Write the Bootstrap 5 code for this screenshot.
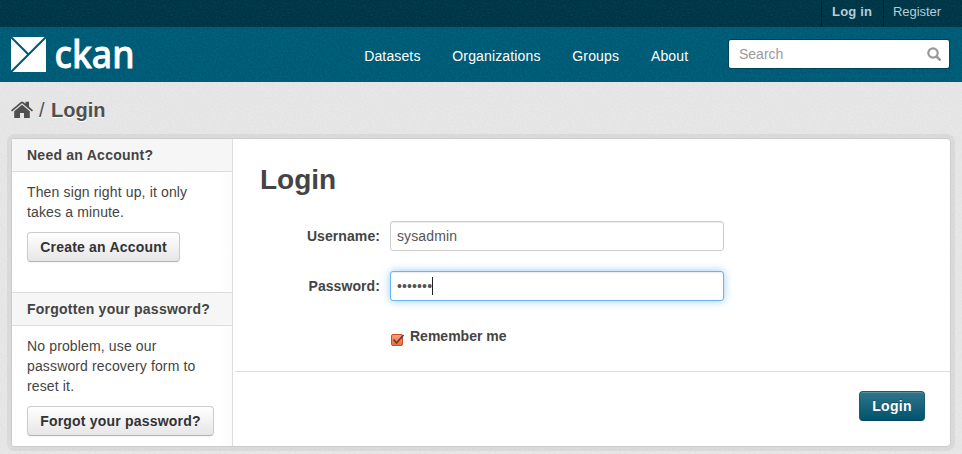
<!DOCTYPE html>
<html lang="en">
<head>
<meta charset="utf-8">
<meta name="viewport" content="width=device-width, initial-scale=1">
<title>Login - CKAN</title>
<link href="https://cdn.jsdelivr.net/npm/bootstrap@5.3.0/dist/css/bootstrap.min.css" rel="stylesheet">
<style>
:root { --grain: url("data:image/svg+xml,%3Csvg xmlns='http://www.w3.org/2000/svg' width='100' height='100'%3E%3Cfilter id='n' x='0' y='0' width='100%25' height='100%25'%3E%3CfeTurbulence type='fractalNoise' baseFrequency='.55' numOctaves='2' stitchTiles='stitch'/%3E%3CfeColorMatrix values='0 0 0 0 1 0 0 0 0 1 0 0 0 0 1 1.2 0 0 0 -.48'/%3E%3C/filter%3E%3Crect width='100' height='100' filter='url(%23n)' opacity='.4'/%3E%3C/svg%3E"); }
body { font-family: "Liberation Sans", Arial, sans-serif; font-size: 14px; line-height: 20px; color: #444; background: #005d7a; height: 454px; overflow: hidden; }
a { color: inherit; text-decoration: none; }
.account-bar { height: 27px; background: var(--grain), #003445; background-blend-mode: soft-light; font-size: 13px; color: #b7cdd5; }
.account-bar a { height: 27px; line-height: 24px; padding: 0 10px; border-left: 1px solid #00202b; }
.account-bar a + a { padding-left: 9px; }
.masthead { height: 55px; background: var(--grain), #005974; background-blend-mode: soft-light; color: #fff; padding: 0 13px 0 11px; }
.brand-art { display: block; margin-top: 1px; }
.site-nav { gap: 31.8px; margin-right: 40.8px; padding-top: 3px; letter-spacing: .14px; }
.site-search { width: 220px; height: 28px; background: #fff; border-radius: 2px; color: #999; padding: 0 8px 0 10px; box-shadow: 0 0 0 1px rgba(0,50,68,.55); margin-top: -1px; }
.page-main { height: 372px; background: var(--grain), #e4e4e4; padding: 0 11px; }
.crumbs { height: 56px; font-size: 20px; color: #505050; text-shadow: 0 1px 0 #fff; }
.crumbs span { margin: 0 6.500px 0 6px; }
.panel { height: 309px; background: #fff; border: 1px solid #ccc; border-radius: 4px; box-shadow: 0 0 0 4px rgba(0,0,0,.05); }
.side { width: 221px; border-right: 1px solid #ddd; background: linear-gradient(to right, #fff 205px, #fcfcfc); border-radius: 3px 0 0 3px; }
.side h2 { font-size: 14px; line-height: 20px; font-weight: 700; margin: 0; padding: 6px 15px; height: 33px; background: #f6f6f6; border-bottom: 1px solid #ddd; white-space: nowrap; letter-spacing: .24px; }
.side .second-title { margin-top: 30px; border-top: 1px solid #ddd; height: 34px; }
.side-text { padding: 10px 15px 0; }
.side-text p { margin: 0 0 10px; white-space: nowrap; letter-spacing: .14px; }
.btn-plain, .btn-go { font-size: 14px; line-height: 20px; font-weight: 700; padding: 4px 0; border-radius: 4px; height: 30px; white-space: nowrap; letter-spacing: .2px; }
.btn-plain { color: #333; border: 1px solid #ccc; border-bottom-color: #b3b3b3; background: linear-gradient(#fff, #e6e6e6); box-shadow: inset 0 1px 0 rgba(255,255,255,.2), 0 1px 2px rgba(0,0,0,.05); }
.btn-go { color: #fff; width: 66px; border: 1px solid #1b5a70; border-bottom-color: #064358; background: linear-gradient(#2f758b, #00536d); box-shadow: inset 0 1px 0 rgba(255,255,255,.2); text-shadow: 0 -1px 0 rgba(0,0,0,.25); letter-spacing: .3px; }
.create { width: 153px; } .forgot { width: 187px; }
.login-form { padding: 23px 0 0 27px; height: 232px; }
.login-form h1 { font-size: 28px; line-height: 36px; font-weight: 700; margin: 0 0 23px; }
.field-row { height: 30px; margin-bottom: 20px; }
.field-row label { width: 120px; margin-right: 10px; text-align: right; font-weight: 700; letter-spacing: .08px; }
.field-row .form-control { width: 334px; height: 30px; font-size: 14px; line-height: 20px; padding: 4px 6px; border: 1px solid #ccc; border-radius: 3px; color: #555; box-shadow: inset 0 1px 1px rgba(0,0,0,.075); letter-spacing: .12px; }
.field-row .is-focused { border-color: #6cb4ec; box-shadow: inset 0 1px 1px rgba(0,0,0,.075), 0 0 8px rgba(82,168,236,.6); }
.caret-bar { width: 1px; height: 18px; background: #222; }
.remember { padding-left: 130px; margin-top: 25px; font-weight: 700; }
.remember svg { margin: 7px 5px 0 0; }
.actions { border-top: 1px solid #ddd; margin-left: 2px; padding: 19px 25px 0 0; }
</style>
<script src="https://cdn.jsdelivr.net/npm/bootstrap@5.3.0/dist/js/bootstrap.bundle.min.js"></script>
</head>
<body>
<div class="account-bar d-flex justify-content-end">
  <a href="#" class="fw-bold"><svg width="41" height="24" class="d-block"><text x="0" y="16" textLength="40" fill="currentColor">Log in</text></svg></a>
  <a href="#"><svg width="59" height="24" class="d-block"><text x="0" y="16" textLength="48" fill="currentColor">Register</text></svg></a>
</div>
<header class="masthead d-flex align-items-center">
  <a href="#" class="me-auto" aria-label="CKAN">
    <svg class="brand-art" width="140" height="60" viewBox="0 -8 140 60">
      <path d="M0 4h35v35H0z" fill="#fff"/>
      <path d="M0 4l17.500 17.500M35 4L0 39" stroke="#005974" stroke-width="2"/>
      <text x="43.500" y="34.500" font-family="'Noto Sans','Open Sans',sans-serif" font-size="38" font-weight="500" fill="#fff" stroke="#fff" stroke-width=".8" textLength="80" lengthAdjust="spacingAndGlyphs">ckan</text>
    </svg>
  </a>
  <nav class="site-nav d-flex">
    <a href="#">Datasets</a><a href="#">Organizations</a><a href="#">Groups</a><a href="#">About</a>
  </nav>
  <div class="site-search d-flex align-items-center justify-content-between">
    <span>Search</span>
    <svg width="14" height="14" viewBox="0 0 14 14" fill="none" stroke="#999"><circle cx="6" cy="6" r="4.700" stroke-width="2.200"/><path d="M9.500 9.500l3.200 3.200" stroke-width="2.600" stroke-linecap="round"/></svg>
  </div>
</header>
<main class="page-main">
  <div class="crumbs d-flex align-items-center">
    <svg width="22" height="18" viewBox="0 0 22 18" fill="#505050"><path d="M11 3.800L3.200 10.200V17H9v-5h4v5h5.800v-6.800z"/><path d="M0 9.200L9.800.9q1.200-.9 2.400 0L14.500 2.800V.8H18v5l4 3.400-1 1.200L11 2.300 1 10.400z"/></svg>
    <span>/</span><strong>Login</strong>
  </div>
  <div class="panel d-flex">
    <aside class="side flex-shrink-0">
      <h2>Need an Account?</h2>
      <div class="side-text"><p>Then sign right up, it only<br>takes a minute.</p><a href="#" class="btn btn-plain create d-block">Create an Account</a></div>
      <h2 class="second-title">Forgotten your password?</h2>
      <div class="side-text"><p>No problem, use our<br>password recovery form to<br>reset it.</p><a href="#" class="btn btn-plain forgot d-block">Forgot your password?</a></div>
    </aside>
    <section class="flex-grow-1">
      <form>
        <div class="login-form">
          <h1>Login</h1>
          <div class="field-row d-flex align-items-center"><label for="user">Username:</label><input id="user" class="form-control" value="sysadmin"></div>
          <div class="field-row d-flex align-items-center"><label>Password:</label><div class="form-control is-focused d-flex align-items-center"><span>•••••••</span><span class="caret-bar"></span></div></div>
          <div class="remember d-flex align-items-start">
            <svg width="15" height="14" viewBox="0 0 15 14"><defs><linearGradient id="orange" x2="0" y2="1"><stop stop-color="#f9a27e"/><stop offset="1" stop-color="#ee6b43"/></linearGradient></defs><rect x="1.500" y="1.500" width="11" height="11" rx="1.500" fill="url(#orange)" stroke="#c84f2b"/><path d="M3.500 6.500l3 3.500L13.500 2" fill="none" stroke="#643c30" stroke-width="1.800"/></svg>
            <label>Remember me</label>
          </div>
        </div>
        <div class="actions d-flex justify-content-end"><button type="button" class="btn btn-go">Login</button></div>
      </form>
    </section>
  </div>
</main>
</body>
</html>
